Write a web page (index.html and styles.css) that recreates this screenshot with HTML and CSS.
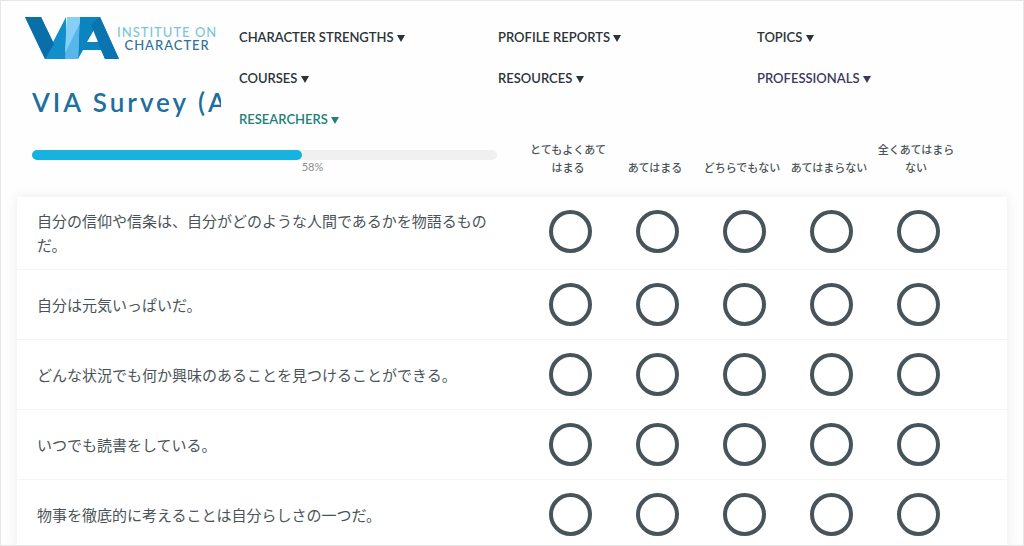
FILE: index.html
```html
<!DOCTYPE html>
<html lang="ja">

<head>
    <meta charset="UTF-8">
    <meta name="viewport" content="width=device-width, initial-scale=1.0">
    <link rel="stylesheet" href="styles.css">
    <title>VIA Survey</title>
</head>

<body>
    <header class="header">
        <div class="brand">
            <a class="logo" href="#">
                <svg class="logo-mark" viewBox="0 0 94 42" aria-hidden="true">
                    <polygon points="0,0 16,0 28,25 41,0 41,42 20,42" fill="#128fca" />
                    <polygon points="0,0 16,0 29,27 20,42" fill="#0a6ea8" />
                    <path d="M54 0H75L94 42H80L76 33H58L53 42ZM69 13L62 25H74Z" fill="#0b84bf" fill-rule="evenodd" />
                    <polygon points="75,0 94,42 80,42 66,8" fill="#0a74ae" />
                    <polygon points="42,0 55,0 53,42 40,42" fill="#57b7ea" />
                    <polygon points="55,0 55,6 40,36 42,0" fill="#86d0f7" />
                </svg>
                <span class="logo-text">
                    <span class="logo-top">INSTITUTE ON</span>
                    <span class="logo-bottom">CHARACTER</span>
                </span>
            </a>
            <h1 class="title">VIA Survey (A</h1>
        </div>
        <nav class="nav">
            <a href="#">CHARACTER STRENGTHS <span class="arrow"></span></a>
            <a href="#">PROFILE REPORTS <span class="arrow"></span></a>
            <a href="#">TOPICS <span class="arrow"></span></a>
            <a href="#">COURSES <span class="arrow"></span></a>
            <a href="#">RESOURCES <span class="arrow"></span></a>
            <a href="#" class="professionals">PROFESSIONALS <span class="arrow"></span></a>
            <a href="#" class="researchers">RESEARCHERS <span class="arrow"></span></a>
        </nav>
    </header>

    <main class="survey">
        <table class="questions">
            <thead>
                <tr>
                    <td class="progress-cell">
                        <div class="progress">
                            <div class="progress-bar" style="width: 58%"></div>
                        </div>
                        <div class="progress-label" style="margin-left: 58%">58%</div>
                    </td>
                    <th class="choice" scope="col" id="c1">とてもよくあてはまる</th>
                    <th class="choice" scope="col" id="c2">あてはまる</th>
                    <th class="choice" scope="col" id="c3">どちらでもない</th>
                    <th class="choice" scope="col" id="c4">あてはまらない</th>
                    <th class="choice" scope="col" id="c5">全くあてはまらない</th>
                    <td class="gutter"></td>
                </tr>
            </thead>
            <tbody>
                <tr>
                    <th class="question" scope="row" id="q1">自分の信仰や信条は、自分がどのような人間であるかを物語るものだ。</th>
                    <td><input type="radio" name="q1" aria-labelledby="q1 c1"></td>
                    <td><input type="radio" name="q1" aria-labelledby="q1 c2"></td>
                    <td><input type="radio" name="q1" aria-labelledby="q1 c3"></td>
                    <td><input type="radio" name="q1" aria-labelledby="q1 c4"></td>
                    <td><input type="radio" name="q1" aria-labelledby="q1 c5"></td>
                    <td></td>
                </tr>
                <tr>
                    <th class="question" scope="row" id="q2">自分は元気いっぱいだ。</th>
                    <td><input type="radio" name="q2" aria-labelledby="q2 c1"></td>
                    <td><input type="radio" name="q2" aria-labelledby="q2 c2"></td>
                    <td><input type="radio" name="q2" aria-labelledby="q2 c3"></td>
                    <td><input type="radio" name="q2" aria-labelledby="q2 c4"></td>
                    <td><input type="radio" name="q2" aria-labelledby="q2 c5"></td>
                    <td></td>
                </tr>
                <tr>
                    <th class="question" scope="row" id="q3">どんな状況でも何か興味のあることを見つけることができる。</th>
                    <td><input type="radio" name="q3" aria-labelledby="q3 c1"></td>
                    <td><input type="radio" name="q3" aria-labelledby="q3 c2"></td>
                    <td><input type="radio" name="q3" aria-labelledby="q3 c3"></td>
                    <td><input type="radio" name="q3" aria-labelledby="q3 c4"></td>
                    <td><input type="radio" name="q3" aria-labelledby="q3 c5"></td>
                    <td></td>
                </tr>
                <tr>
                    <th class="question" scope="row" id="q4">いつでも読書をしている。</th>
                    <td><input type="radio" name="q4" aria-labelledby="q4 c1"></td>
                    <td><input type="radio" name="q4" aria-labelledby="q4 c2"></td>
                    <td><input type="radio" name="q4" aria-labelledby="q4 c3"></td>
                    <td><input type="radio" name="q4" aria-labelledby="q4 c4"></td>
                    <td><input type="radio" name="q4" aria-labelledby="q4 c5"></td>
                    <td></td>
                </tr>
                <tr>
                    <th class="question" scope="row" id="q5">物事を徹底的に考えることは自分らしさの一つだ。</th>
                    <td><input type="radio" name="q5" aria-labelledby="q5 c1"></td>
                    <td><input type="radio" name="q5" aria-labelledby="q5 c2"></td>
                    <td><input type="radio" name="q5" aria-labelledby="q5 c3"></td>
                    <td><input type="radio" name="q5" aria-labelledby="q5 c4"></td>
                    <td><input type="radio" name="q5" aria-labelledby="q5 c5"></td>
                    <td></td>
                </tr>
            </tbody>
        </table>
    </main>
</body>

</html>
```
FILE: styles.css
```css
* {
    margin: 0;
    padding: 0;
    box-sizing: border-box;
}

body {
    height: 100vh;
    overflow: hidden;
    border: 1px solid #e6e6e6;
    background: #fefefe;
    color: #4a5458;
    font-family: Lato, "Noto Sans CJK JP", sans-serif;
}

a {
    text-decoration: none;
}

/* header */
.header {
    display: flex;
    padding-top: 16px;
}

.brand {
    flex: 0 0 220px;
    overflow: hidden;
    white-space: nowrap;
}

.logo {
    display: flex;
    padding-left: 24px;
}

.logo-mark {
    flex: none;
    width: 94px;
    height: 42px;
}

.logo-text {
    display: flex;
    flex-direction: column;
    align-items: center;
    padding-top: 9px;
    margin-left: -2px;
    font-size: 13px;
    line-height: 13px;
    font-weight: 500;
    letter-spacing: 1px;
}

.logo-top {
    color: #7cc5d8;
}

.logo-bottom {
    color: #2f7199;
}

.title {
    padding: 27px 0 0 31px;
    font-size: 26px;
    line-height: 32px;
    font-weight: 600;
    letter-spacing: 3px;
    color: #1d6f9f;
}

.nav {
    flex: 1;
    display: grid;
    grid-template-columns: repeat(3, 1fr);
    padding: 0 7px 0 18px;
}

.nav a {
    font-size: 13px;
    line-height: 41px;
    font-weight: 600;
    color: #2b3338;
}

.nav .professionals {
    color: #3b3a5e;
}

.nav .researchers {
    color: #23807a;
}

.arrow {
    display: inline-block;
    border: 4px solid transparent;
    border-top: 7px solid currentColor;
    border-bottom: 0;
}

/* survey */
.survey {
    padding: 0 16px;
}

.questions {
    width: 100%;
    table-layout: fixed;
    border-collapse: collapse;
}

.questions tbody {
    background: #fff;
    box-shadow: 0 0 12px rgba(0, 0, 0, 0.08);
}

.questions tbody tr + tr {
    border-top: 1px solid #f5f5f5;
}

.progress-cell {
    padding: 10px 30px 0 15px;
    vertical-align: top;
}

.progress {
    height: 10px;
    border-radius: 5px;
    background: #f0f0f0;
}

.progress-bar {
    height: 10px;
    border-radius: 5px;
    background: #17b3e0;
}

.progress-label {
    font-size: 11px;
    line-height: 14px;
    color: #8c8c8c;
}

.choice {
    width: 87px;
    padding: 1px 5px 20px 0;
    vertical-align: bottom;
    font-size: 11px;
    line-height: 18px;
    font-weight: 500;
}

.gutter {
    width: 45px;
}

.question {
    height: 70px;
    padding: 12px 20px;
    text-align: left;
    font-size: 15px;
    line-height: 24px;
    font-weight: 400;
}

.questions tbody td {
    padding: 13px 0;
    text-align: center;
    vertical-align: middle;
}

.questions tbody tr:first-child td {
    vertical-align: top;
}

.questions input {
    display: block;
    width: 43px;
    height: 43px;
    margin: 0 auto;
    appearance: none;
    border: 4px solid #47555a;
    border-radius: 50%;
    background: #fff;
}

.questions input:checked {
    background: #17b3e0;
}
```
